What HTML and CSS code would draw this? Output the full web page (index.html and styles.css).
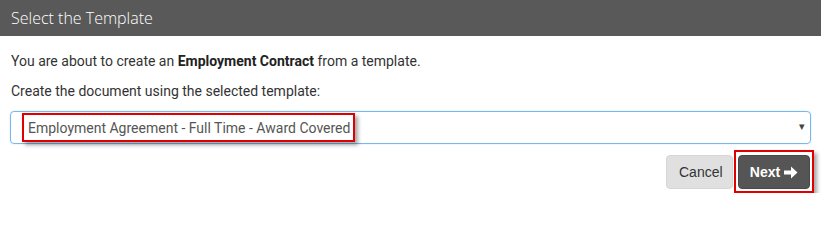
FILE: index.html
```html
<!DOCTYPE html>
<html>
<head>
<meta charset="utf-8">
<link rel="stylesheet" href="styles.css">
</head>
<body>
<div class="header"><h1 class="title">Select the Template</h1></div>
<div class="content">
  <p class="line">You are about to create an <b>Employment Contract</b> from a template.</p>
  <p class="line second">Create the document using the selected template:</p>
  <div class="select">
    <span class="highlight">Employment Agreement - Full Time - Award Covered</span>
    <span class="caret">&#9662;</span>
  </div>
  <div class="actions">
    <button class="btn cancel">Cancel</button>
    <span class="next-wrap">
      <button class="btn next">Next
        <svg class="arrow" width="14" height="13" viewBox="0 0 14 13"><path d="M0 4.5H7V0.5L13.5 6.5L7 12.5V8.5H0Z" fill="#fff"/></svg>
      </button>
    </span>
  </div>
</div>
</body>
</html>
```
FILE: styles.css
```css
html, body { margin: 0; padding: 0; background: #fff; }
body { font-family: Roboto, "Liberation Sans", sans-serif; color: #333; }
.header {
  height: 36px;
  background: #595959;
  display: flex;
  align-items: center;
  padding-left: 11px;
}
.title {
  margin: 0;
  font-family: "Open Sans", sans-serif;
  font-weight: 300;
  font-size: 16px;
  color: #fff;
  line-height: 20px;
}
.content { padding: 15px 10px 0 10px; }
.line {
  margin: 0 0 10px 1px;
  font-size: 14px;
  line-height: 20px;
  color: #333;
}
.line b { font-weight: 700; color: #222; }
.select {
  height: 33px;
  box-sizing: border-box;
  border: 1px solid #7ab8ea;
  border-radius: 4px;
  display: flex;
  align-items: center;
  padding: 0 0 0 11px;
  position: relative;
  box-shadow: 0 0 2px rgba(102,175,233,0.35);
}
.highlight {
  border: 2px solid #e00000;
  height: 29px;
  box-sizing: border-box;
  padding: 0 3px 0 4px;
  display: flex;
  align-items: center;
  font-size: 14px;
  color: #555;
  box-shadow: 3px 3px 4px rgba(0,0,0,0.35);
}
.caret {
  position: absolute;
  right: 5px;
  top: 8px;
  font-size: 11px;
  color: #444;
}
.actions {
  display: flex;
  justify-content: flex-end;
  align-items: center;
  margin-top: 6px;
  margin-right: -3px;
}
.btn {
  height: 34px;
  border-radius: 4px;
  font-family: "Liberation Sans", Arial, sans-serif;
  font-size: 14px;
  padding: 0 12px;
  cursor: pointer;
}
.cancel {
  background: #e0e0e0;
  border: 1px solid #d6d6d6;
  color: #333;
  width: 67px;
}
.next-wrap {
  border: 2px solid #e00000;
  padding: 3px 2px 2px 2px;
  margin-left: 1px;
  display: flex;
  box-shadow: 3px 3px 4px rgba(0,0,0,0.35);
}
.next {
  background: #555;
  border: 1px solid #4a4a4a;
  color: #fff;
  font-weight: 700;
  width: 72px;
  display: flex;
  align-items: center;
  justify-content: center;
  gap: 4px;
  padding: 0;
}
.arrow { display: block; }
```
